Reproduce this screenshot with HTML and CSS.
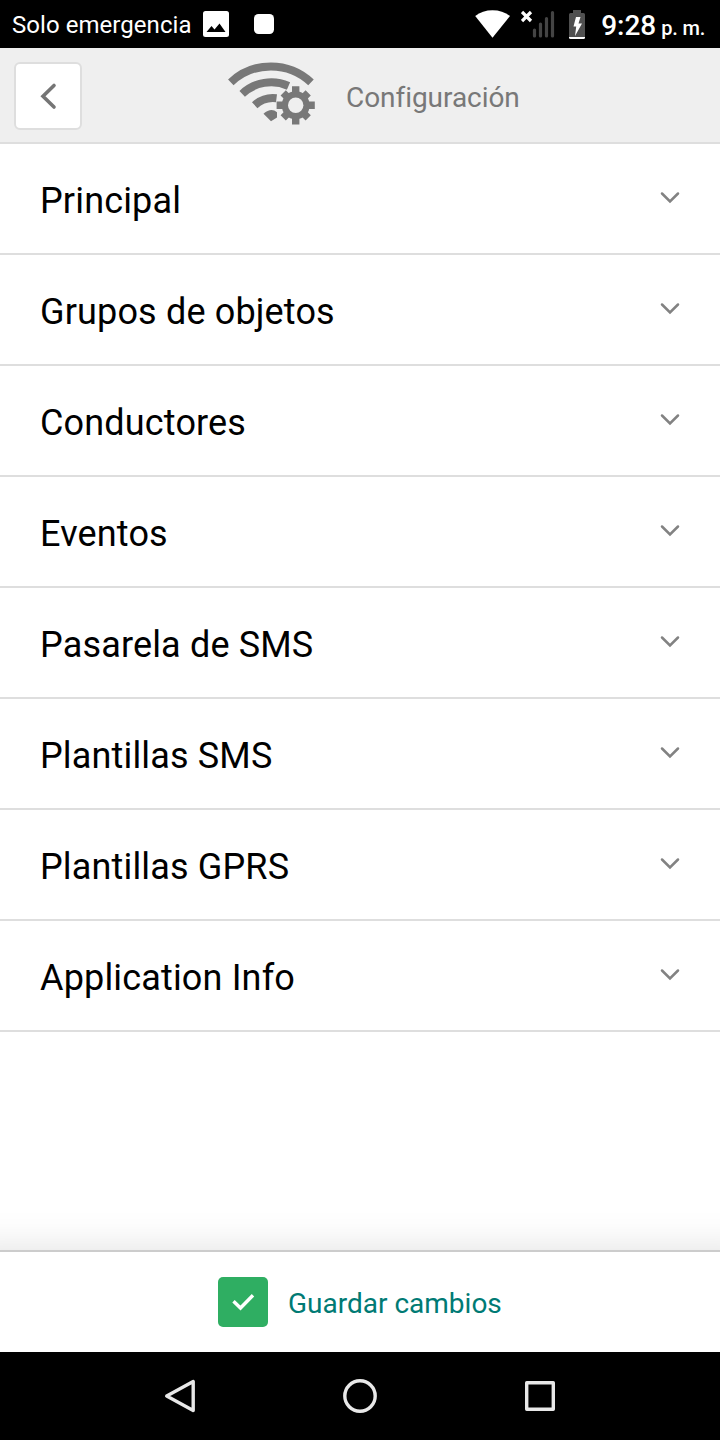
FILE: index.html
```html
<!DOCTYPE html>
<html lang="es">
<head>
<meta charset="utf-8">
<title>Configuración</title>
<link rel="stylesheet" href="styles.css">
</head>
<body>
<div class="screen">
  <div class="status">
    <span class="carrier">Solo emergencia</span>
    <svg class="photo" width="26" height="26" viewBox="0 0 26 26"><rect width="26" height="26" rx="2.5" fill="#fff"/><path d="M3.500 21 8.500 15l3 3.600L16.500 12.500 22.500 21z" fill="#000"/></svg>
    <svg class="app" width="20" height="20" viewBox="0 0 20 20"><rect width="20" height="20" rx="4.500" fill="#fff"/></svg>
    <svg class="wifi" width="36" height="28" viewBox="475 9.500 36 28"><path d="M475.200 15.500Q482.500 9.800 492.500 9.800T510 15.500L492.500 37.200Z" fill="#fff"/></svg>
    <svg class="signal" width="34" height="28" viewBox="521 10 34 28"><path d="m522 12 9 9m0-9-9 9" stroke="#fff" stroke-width="3.200"/><path d="M534.500 30v6M540.500 24v12M546.500 18.500V36M552.500 12.500V36" stroke="#444" stroke-width="3.200" stroke-linecap="round"/></svg>
    <svg class="battery" width="16" height="29" viewBox="569 9 16 29"><path d="M573 9h8v3h2.500q1.500 0 1.500 1.500V36h-16V13.500q0-1.500 1.500-1.500h2.500z" fill="#505050"/><path d="M569 36h16v.5q0 1.500-1.500 1.500h-13q-1.500 0-1.500-1.500z" fill="#fff"/><path d="M576 16h4.500l-2 6.500h3.500l-7 12.500 1.200-9.500H573.500z" fill="#fff"/></svg>
    <span class="clock">9:28</span><span class="ampm">p. m.</span>
  </div>
  <header class="header">
    <button class="back" aria-label="Atrás"><svg width="18" height="28" viewBox="0 0 18 28"><path d="M15 3.500 4 14.300l11 10.700" fill="none" stroke="#757575" stroke-width="3.600" stroke-linecap="round" stroke-linejoin="miter"/></svg></button>
    <svg class="logo" width="94" height="68" viewBox="225 60 94 68">
      <g fill="none" stroke="#787878" stroke-width="8">
        <path d="M230.800 82.300A58.500 58.500 0 0 1 311 82.300"/>
        <path d="M242.200 93.800A42.500 42.500 0 0 1 288.500 86"/>
        <path d="M254.700 105.200A27 27 0 0 1 276.500 98.200"/>
      </g>
      <path d="M263.500 113.800q7.500-6.500 13.500-1.600v5.300l-6 3.700z" fill="#787878"/>
      <circle cx="295.700" cy="105.300" r="18" fill="#efefef"/>
      <g stroke="#787878" stroke-width="7.400">
        <path d="M295.700 86.200v38.200M276.600 105.300h38.200M283.200 92.800l25 25M308.200 92.800l-25 25"/>
      </g>
      <circle cx="295.700" cy="105.300" r="14" fill="#787878"/>
      <circle cx="295.700" cy="105.300" r="7.700" fill="#efefef"/>
    </svg>
    <h1 class="title">Configuración</h1>
  </header>
  <main class="list">
    <div class="row"><span>Principal</span><svg class="chev" width="20" height="14" viewBox="0 0 20 14"><path d="M2 2.500 10 10.500 18 2.500"/></svg></div>
    <div class="row"><span>Grupos de objetos</span><svg class="chev" width="20" height="14" viewBox="0 0 20 14"><path d="M2 2.500 10 10.500 18 2.500"/></svg></div>
    <div class="row"><span>Conductores</span><svg class="chev" width="20" height="14" viewBox="0 0 20 14"><path d="M2 2.500 10 10.500 18 2.500"/></svg></div>
    <div class="row"><span>Eventos</span><svg class="chev" width="20" height="14" viewBox="0 0 20 14"><path d="M2 2.500 10 10.500 18 2.500"/></svg></div>
    <div class="row"><span>Pasarela de SMS</span><svg class="chev" width="20" height="14" viewBox="0 0 20 14"><path d="M2 2.500 10 10.500 18 2.500"/></svg></div>
    <div class="row"><span>Plantillas SMS</span><svg class="chev" width="20" height="14" viewBox="0 0 20 14"><path d="M2 2.500 10 10.500 18 2.500"/></svg></div>
    <div class="row"><span>Plantillas GPRS</span><svg class="chev" width="20" height="14" viewBox="0 0 20 14"><path d="M2 2.500 10 10.500 18 2.500"/></svg></div>
    <div class="row"><span>Application Info</span><svg class="chev" width="20" height="14" viewBox="0 0 20 14"><path d="M2 2.500 10 10.500 18 2.500"/></svg></div>
  </main>
  <footer class="save">
    <svg width="50" height="50" viewBox="0 0 50 50"><rect width="50" height="50" rx="5" fill="#2fae62"/><path d="M15.500 24.200 22.500 31 35 18.200" fill="none" stroke="#fff" stroke-width="3.400"/></svg>
    <span class="save-text">Guardar cambios</span>
  </footer>
  <nav class="nav">
    <svg width="36" height="36" viewBox="0 0 36 36"><path d="M31.200 3.500v29L4.700 18z"/></svg>
    <svg width="36" height="36" viewBox="0 0 36 36"><circle cx="18" cy="18" r="15.200"/></svg>
    <svg width="36" height="36" viewBox="0 0 36 36"><rect x="4.700" y="4.700" width="26.600" height="26.600"/></svg>
  </nav>
</div>
</body>
</html>
```
FILE: styles.css
```css
* { box-sizing: border-box; }
body { margin: 0; background: #fff; font-family: Roboto, "Liberation Sans", sans-serif; }
svg { display: block; flex: none; }
.screen { width: 720px; height: 1440px; display: flex; flex-direction: column; overflow: hidden; }
.status { height: 48px; flex: none; background: #000; color: #fff; display: flex; align-items: center; padding: 0 15px 0 12px; white-space: nowrap; }
.carrier { font-size: 24px; letter-spacing: .05px; line-height: 30px; width: 180px; margin-right: 11px; padding-top: 1px; }
.app { margin-left: 24.5px; }
.wifi { margin-left: auto; }
.signal { margin-left: 10px; }
.battery { margin-left: 14px; }
.clock { font-size: 28px; font-weight: 500; line-height: 34px; margin-left: 16px; padding-top: 3px; }
.ampm { font-size: 20px; font-weight: 500; letter-spacing: -.2px; line-height: 24px; margin-left: 5px; padding-top: 7px; }
.header { height: 96px; flex: none; display: flex; align-items: center; background: #efefef; border-bottom: 2px solid #dedede; padding: 2px 0 0 14px; }
.back { width: 68px; height: 68px; display: flex; align-items: center; justify-content: center; background: #fff; border: 2px solid #dedede; border-radius: 6px; padding: 0; }
.logo { margin: 0 0 4px 143px; }
.title { margin: 0 0 0 27px; padding-top: 3px; font-size: 28px; letter-spacing: -.05px; line-height: 34px; font-weight: 400; color: #787878; }
.list { flex: 1; }
.row { height: 111px; display: flex; align-items: center; justify-content: space-between; padding: 4px 40px 0; border-bottom: 2px solid #dedede; font-size: 36px; letter-spacing: .16px; line-height: 42px; color: #000; }
.chev { margin-bottom: 5px; fill: none; stroke: #828282; stroke-width: 2.5; stroke-linecap: round; }
/* Extends past both screen edges so that the shadow stays even across the width. */
.save { height: 102px; flex: none; display: flex; align-items: center; gap: 20px; margin: 0 -40px; padding-left: 258px; background: #fff; border-top: 2px solid #ccc; box-shadow: 0 0 40px rgba(0, 0, 0, .13); }
.save-text { font-size: 28px; line-height: 34px; color: #007a74; padding-top: 3px; }
.nav { position: relative; height: 88px; flex: none; display: flex; align-items: center; justify-content: center; gap: 144px; background: #000; fill: none; stroke: #e8e8e8; stroke-width: 3.4; stroke-linejoin: round; }
```
